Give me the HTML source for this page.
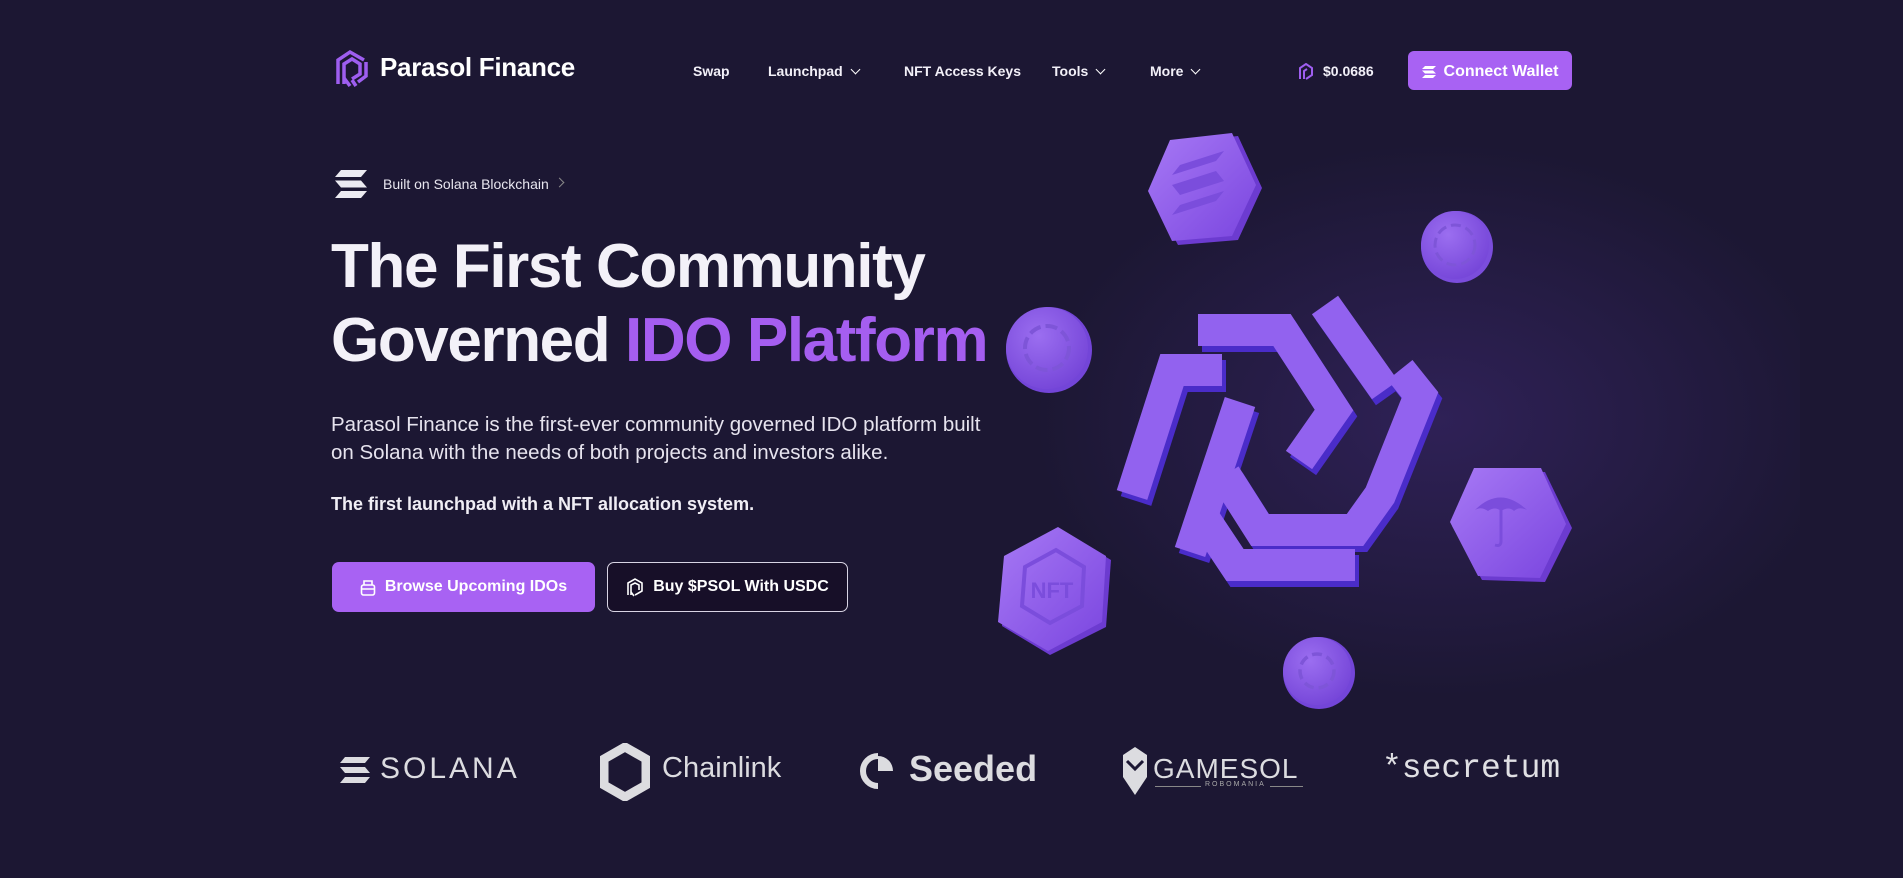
<!DOCTYPE html>
<html><head><meta charset="utf-8"><style>
*{margin:0;padding:0;box-sizing:border-box}
body{width:1903px;height:878px;overflow:hidden;background:#1c1733;font-family:"Liberation Sans",sans-serif;color:#fff;position:relative}
.glow{position:absolute;left:1000px;top:120px;width:800px;height:600px;background:radial-gradient(ellipse at 55% 50%,rgba(70,45,130,.45),rgba(28,23,51,0) 65%)}
.a{position:absolute;white-space:nowrap}
.nav{font-size:14px;font-weight:bold;top:63px;color:#f2f0f8}
.chev{display:inline-block;width:7px;height:7px;border-right:1.6px solid #fff;border-bottom:1.6px solid #fff;transform:rotate(45deg);margin-left:9px;position:relative;top:-3px}
h1{position:absolute;left:331px;top:230px;font-size:62px;line-height:74px;font-weight:bold;color:#f3f1f8;letter-spacing:-1.4px;white-space:nowrap}
h1 span{color:#a55ef0}
.p{left:331px;font-size:20.5px;color:#e6e3ee}
.btn{position:absolute;top:562px;height:50px;border-radius:7px;font-size:16px;font-weight:bold;display:flex;align-items:center;justify-content:center;line-height:1}
.logo{position:absolute;top:741px;color:#dcdce0}
</style></head><body>
<div class="glow"></div>
<svg class="a" style="left:334px;top:48px" width="36" height="40" viewBox="0 0 36 40"><g fill="none" stroke="#9e5ef0" stroke-width="3.5"><path d="M4 36V12L16 4l14 8"/><path d="M10 36V16l8-5 8 5v10l-8 5"/><path d="M16 38l-6-8M22 38l-4-6"/><path d="M32 14v14l-8 6"/></g></svg>
<div class="a" style="left:380px;top:52px;font-size:26px;font-weight:bold;color:#fff;letter-spacing:-0.3px">Parasol Finance</div>
<div class="a nav" style="left:693px">Swap</div>
<div class="a nav" style="left:768px">Launchpad<span class="chev"></span></div>
<div class="a nav" style="left:904px">NFT Access Keys</div>
<div class="a nav" style="left:1052px">Tools<span class="chev"></span></div>
<div class="a nav" style="left:1150px">More<span class="chev"></span></div>
<svg class="a" style="left:1298px;top:63px" width="16" height="17" viewBox="0 0 16 17"><g fill="none" stroke="#9e5ef0" stroke-width="2"><path d="M2 16V5l6-4 6 4v7l-6 4"/><path d="M6 16V8l3-2"/></g></svg>
<div class="a nav" style="left:1323px;top:63px">$0.0686</div>
<div class="btn" style="left:1408px;top:51px;width:164px;height:39px;background:#a862f3;border-radius:6px;font-size:16px;padding-top:2px"><svg width="14" height="14" viewBox="0 0 14 14" style="margin-right:8px"><path d="M3 1h11l-3 3H0zM0 5.5h11l3 3H3zM3 10h11l-3 3H0z" fill="#fff"/></svg>Connect Wallet</div>
<svg class="a" style="left:335px;top:170px" width="32" height="28" viewBox="0 0 32 28"><path d="M6 0h26l-6 7H0zM0 10.5h26l6 7H6zM6 21h26l-6 7H0z" fill="#ecebf2"/></svg>
<div class="a" style="left:383px;top:176px;font-size:14px;color:#e8e6ef">Built on Solana Blockchain</div>
<div class="a" style="left:556px;top:179px;width:7px;height:7px;border-right:1.5px solid #888;border-top:1.5px solid #888;transform:rotate(45deg)"></div>
<h1>The First Community<br>Governed <span>IDO Platform</span></h1>
<div class="a p" style="top:413px">Parasol Finance is the first-ever community governed IDO platform built</div>
<div class="a p" style="top:441px">on Solana with the needs of both projects and investors alike.</div>
<div class="a p" style="top:494px;font-size:18px;font-weight:bold;color:#f0eef5">The first launchpad with a NFT allocation system.</div>
<div class="btn" style="left:332px;width:263px;background:#a862f3"><svg width="16" height="18" viewBox="0 0 16 18" style="margin-right:9px"><g fill="none" stroke="#fff" stroke-width="1.6"><rect x="1.5" y="7" width="13" height="10" rx="2"/><path d="M4 7V3h8v4M1.5 11h13"/></g></svg>Browse Upcoming IDOs</div>
<div class="btn" style="left:607px;width:241px;border:1.5px solid #d8d4e4;background:#170f28"><svg width="18" height="20" viewBox="0 0 18 20" style="margin-right:9px"><g fill="none" stroke="#fff" stroke-width="1.6"><path d="M2 18V6l7-4 7 4v8l-7 4"/><path d="M5 18V8l4-2 4 2v5"/><path d="M8 19l-3-4"/></g></svg>Buy $PSOL With USDC</div>
<svg class="a" style="left:0;top:0" width="1903" height="878" viewBox="0 0 1903 878">
<defs>
<linearGradient id="g" x1="0" y1="0" x2="1" y2="1"><stop offset="0" stop-color="#a779f5"/><stop offset="1" stop-color="#7a45df"/></linearGradient>
<radialGradient id="c" cx=".4" cy=".35" r=".7"><stop offset="0" stop-color="#9b6ef0"/><stop offset="1" stop-color="#7545d8"/></radialGradient>
</defs>
<polygon points="1175,143 1238,136 1262,188 1238,240 1178,245 1152,195" fill="#6c3bd0"/>
<polygon points="1170,140 1232,133 1256,185 1232,236 1172,241 1148,191" fill="url(#g)"/>
<g fill="#7b4ddc"><path d="M1180 165l44-14-8 10-44 14z"/><path d="M1172 185l44-14 8 10-44 14z"/><path d="M1180 205l44-14-8 10-44 14z"/></g>
<circle cx="1457" cy="247" r="36" fill="#7b4ddc"/><circle cx="1455" cy="245" r="34" fill="url(#c)"/><circle cx="1455" cy="245" r="20" fill="none" stroke="#7e55d8" stroke-width="3" stroke-dasharray="10 5"/>
<circle cx="1049" cy="350" r="43" fill="#7345d8"/><circle cx="1047" cy="348" r="41" fill="url(#c)"/><circle cx="1047" cy="348" r="22" fill="none" stroke="#7e55d8" stroke-width="4" stroke-dasharray="12 5"/>
<circle cx="1319" cy="673" r="36" fill="#7345d8"/><circle cx="1317" cy="671" r="34" fill="url(#c)"/><circle cx="1317" cy="671" r="17" fill="none" stroke="#7e55d8" stroke-width="3.5" stroke-dasharray="10 5"/>
<polygon points="1478,472 1545,472 1572,528 1545,582 1482,580 1452,526" fill="#6c3bd0"/>
<polygon points="1474,468 1541,468 1566,524 1540,578 1478,576 1450,522" fill="url(#g)"/>
<path d="M1475 510q25-25 52 0q-8-4-13 1q-5-5-13 0q-6-5-13 0q-7-5-13-1z" fill="#7b4ddc"/><path d="M1501 505v36q0 6-6 4" fill="none" stroke="#7b4ddc" stroke-width="3"/>
<polygon points="1008,560 1063,531 1111,560 1106,627 1050,655 1002,626" fill="#6c3bd0"/>
<polygon points="1004,556 1058,527 1106,556 1102,622 1048,651 998,622" fill="url(#g)"/>
<polygon points="1025,567 1056,550 1084,567 1082,606 1050,623 1022,606" fill="none" stroke="#7b4ddc" stroke-width="4"/>
<text x="1052" y="598" font-family="Liberation Sans" font-size="22" font-weight="bold" fill="#7b4ddc" text-anchor="middle">NFT</text>
<g stroke-linejoin="miter" fill="none">
<g stroke="#4a2cc9" stroke-width="32" transform="translate(4,6)">
<path d="M1198 330h84l52 80-35 50"/>
<path d="M1325 305l60 85"/>
<path d="M1222 370h-50l-40 125"/>
<path d="M1240 402l-50 150"/>
<path d="M1225 475l35 55h95l25-35l40-100l-20-25"/>
<path d="M1205 520l30 45h120"/>
</g>
<g stroke="#9262ef" stroke-width="32">
<path d="M1198 330h84l52 80-35 50"/>
<path d="M1325 305l60 85"/>
<path d="M1222 370h-50l-40 125"/>
<path d="M1240 402l-50 150"/>
<path d="M1225 475l35 55h95l25-35l40-100l-20-25"/>
<path d="M1205 520l30 45h120"/>
</g>
</g>
</svg>
<svg class="a" style="left:340px;top:757px" width="30" height="26" viewBox="0 0 30 26"><path d="M5 0h25l-5 6H0zM0 10h25l5 6H5zM5 20h25l-5 6H0z" fill="#dcdce0"/></svg>
<div class="logo" style="left:380px;top:752px;font-size:30px;letter-spacing:3px">SOLANA</div>
<svg class="a" style="left:600px;top:743px" width="50" height="58" viewBox="0 0 50 58"><polygon points="25,4 46,16 46,42 25,54 4,42 4,16" fill="none" stroke="#dcdce0" stroke-width="9"/></svg>
<div class="logo" style="left:662px;top:752px;font-size:29px">Chainlink</div>
<svg class="a" style="left:860px;top:753px" width="36" height="36" viewBox="0 0 36 36"><path d="M18 3a15 15 0 1 0 0 30" fill="none" stroke="#dcdce0" stroke-width="6"/><path d="M18 3a15 15 0 0 1 15 15H18z" fill="#dcdce0"/></svg>
<div class="logo" style="left:909px;top:748px;font-size:36px;font-weight:bold">Seeded</div>
<svg class="a" style="left:1120px;top:745px" width="30" height="52" viewBox="0 0 30 52"><path d="M15 2l12 8v22l-12 18L3 32V10z" fill="#dcdce0"/><path d="M7 16l8 8 8-8" stroke="#1c1733" stroke-width="3" fill="none"/></svg>
<div class="logo" style="left:1153px;top:753px;font-size:28px;letter-spacing:1px">GAMESOL</div>
<div class="a" style="left:1155px;top:786px;width:148px;height:1px;background:#888"></div>
<div class="a" style="left:1201px;top:781px;font-size:7px;color:#aaa;background:#1c1733;padding:0 4px;letter-spacing:2px">ROBOMANIA</div>
<div class="logo" style="left:1382px;top:750px;font-size:33px;font-family:'Liberation Mono',monospace;color:#e0e0e4">*secretum</div>
</body></html>
